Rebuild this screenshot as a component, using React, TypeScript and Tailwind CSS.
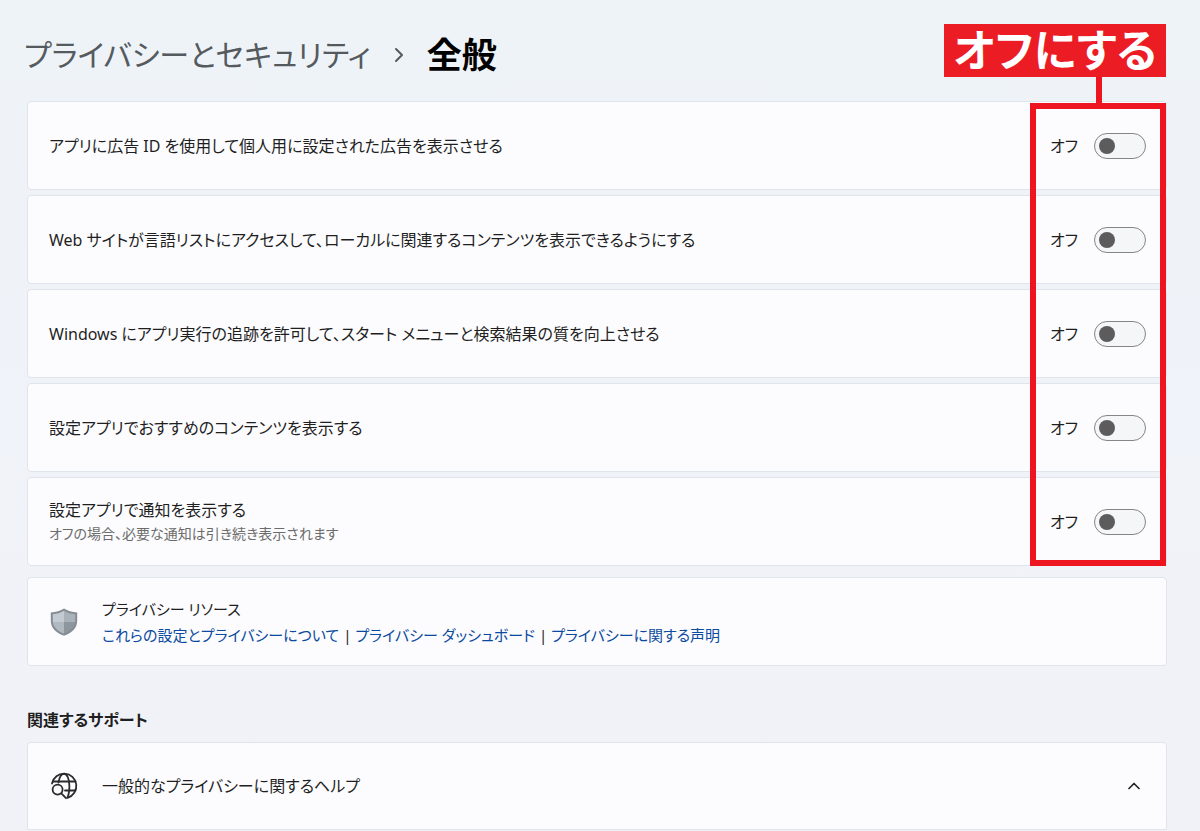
import { useState } from "react";
import { ChevronRight, ChevronUp } from "lucide-react";

type PrivacySetting = {
  id: string;
  title: string;
  note?: string;
};

const SETTINGS: PrivacySetting[] = [
  { id: "ad-id", title: "アプリに広告 ID を使用して個人用に設定された広告を表示させる" },
  { id: "language-list", title: "Web サイトが言語リストにアクセスして、ローカルに関連するコンテンツを表示できるようにする" },
  { id: "launch-tracking", title: "Windows にアプリ実行の追跡を許可して、スタート メニューと検索結果の質を向上させる" },
  { id: "suggestions", title: "設定アプリでおすすめのコンテンツを表示する" },
  { id: "notifications", title: "設定アプリで通知を表示する", note: "オフの場合、必要な通知は引き続き表示されます" },
];

const LINKS = ["これらの設定とプライバシーについて", "プライバシー ダッシュボード", "プライバシーに関する声明"];

function ShieldIcon() {
  return (
    <svg viewBox="0 0 28 28" className="size-7 shrink-0" aria-hidden="true">
      <path d="M14 0.500C10.500 2.800 6 4.200 0.800 4.500V12.500C0.800 19.500 5 24.500 14 27.800C23 24.500 27.200 19.500 27.200 12.500V4.500C22 4.200 17.500 2.800 14 0.500Z" fill="#858c93" />
      <path d="M14 2.800C10.800 4.800 7 6 2.800 6.300V14H14Z" fill="#c3cad1" />
      <path d="M14 2.800C17.200 4.800 21 6 25.200 6.300V14H14Z" fill="#a9b1b9" />
      <path d="M2.800 14C3.400 19.300 7.500 23 14 25.700V14Z" fill="#b0b8c0" />
      <path d="M25.200 14C24.600 19.300 20.500 23 14 25.700V14Z" fill="#8d959d" />
    </svg>
  );
}

function GlobeSearchIcon() {
  return (
    <svg viewBox="0 0 28 28" className="size-7 shrink-0" fill="none" stroke="#2b2b2b" strokeWidth="1.800" strokeLinecap="round" aria-hidden="true">
      <path d="M2 11.500A12.300 12.300 0 1 1 17.500 25.800" />
      <path d="M3 9.500H25.500" />
      <path d="M15 18.500H25.500" />
      <path d="M8.500 10.500C9.300 5.500 11.300 1.900 14 1.900C17.300 1.900 19.400 7.500 19.400 14C19.400 18.500 18.800 22.500 17.500 25.300" />
      <circle cx="7.600" cy="17.600" r="5" />
      <path d="M11.300 21.400L16 26.200" />
    </svg>
  );
}

function SettingRow({ setting }: { setting: PrivacySetting }) {
  const [enabled, setEnabled] = useState(false);

  return (
    <li className="flex h-[89px] items-center justify-between rounded border border-[#e0e4eb] bg-[#fcfcfe] pr-5 pl-[21px]">
      <div>
        <label htmlFor={setting.id} className="block text-[16px] leading-6">
          {setting.title}
        </label>
        {setting.note && <p className="text-[14px] leading-6 text-[#6b6b6b]">{setting.note}</p>}
      </div>
      <div className="flex shrink-0 items-center gap-4">
        <span className="text-[16px] leading-6">{enabled ? "オン" : "オフ"}</span>
        <input
          id={setting.id}
          type="checkbox"
          role="switch"
          checked={enabled}
          onChange={(e) => setEnabled(e.target.checked)}
          className="flex h-[26px] w-[52px] appearance-none items-center rounded-full border border-[#858585] bg-[#f5f6f8] px-1 before:size-4 before:rounded-full before:bg-[#5c5c5c] checked:justify-end checked:bg-[#005fb8] checked:before:bg-white"
        />
      </div>
    </li>
  );
}

export default function App() {
  return (
    <main className="min-h-screen bg-linear-to-b from-[#eef3f8] to-[#f1f2f8] font-['Noto_Sans','Noto_Sans_CJK_JP',sans-serif] text-[#1f1f1f] [font-feature-settings:'palt']">
      <header className="flex h-[101px] items-center pt-2 pl-6">
        <h1 className="flex items-center leading-10">
          <span className="text-[30px] text-[#555a5e]">プライバシーとセキュリティ</span>
          <ChevronRight className="mx-4 size-6 text-[#555a5e]" />
          <span className="text-[35px] font-bold text-black">全般</span>
        </h1>
      </header>

      <div className="pr-[33px] pl-[27px]">
        <section className="relative">
          <ul className="space-y-[5px]">
            {SETTINGS.map((s) => (
              <SettingRow key={s.id} setting={s} />
            ))}
          </ul>

          {/* callout over the switches */}
          <div className="pointer-events-none absolute top-0.5 right-px bottom-0 w-[136px] border-6 border-[#ec1520]">
            <div className="absolute -right-1.5 bottom-full mb-1.5 flex w-[222px] flex-col">
              <p className="bg-[#ec1c24] text-center text-[44px] leading-[53px] font-bold whitespace-nowrap text-white">
                オフにする
              </p>
              <div className="mr-16 h-[26px] w-[6px] self-end bg-[#ec1520]" />
            </div>
          </div>
        </section>

        <section className="mt-[11px] flex h-[89px] items-center gap-6 rounded border border-[#e0e4eb] bg-[#fcfcfe] px-[22px]">
          <ShieldIcon />
          <div className="text-[15px] leading-[26px]">
            <h2>プライバシー リソース</h2>
            <p className="text-[#0b4a9e]">
              {LINKS.map((link, i) => (
                <span key={link}>
                  {i > 0 && <span className="text-[#1f1f1f]"> | </span>}
                  <a href="#">{link}</a>
                </span>
              ))}
            </p>
          </div>
        </section>

        <section className="pt-10">
          <h2 className="text-[16px] leading-7 font-bold">関連するサポート</h2>
          <button
            type="button"
            className="mt-2 flex h-[88px] w-full items-center gap-6 rounded-t border border-[#e0e4eb] bg-[#fcfcfe] px-[22px] text-left text-[16px] leading-6"
          >
            <GlobeSearchIcon />
            <span className="flex-1">一般的なプライバシーに関するヘルプ</span>
            <ChevronUp className="size-5" />
          </button>
        </section>
      </div>
    </main>
  );
}
